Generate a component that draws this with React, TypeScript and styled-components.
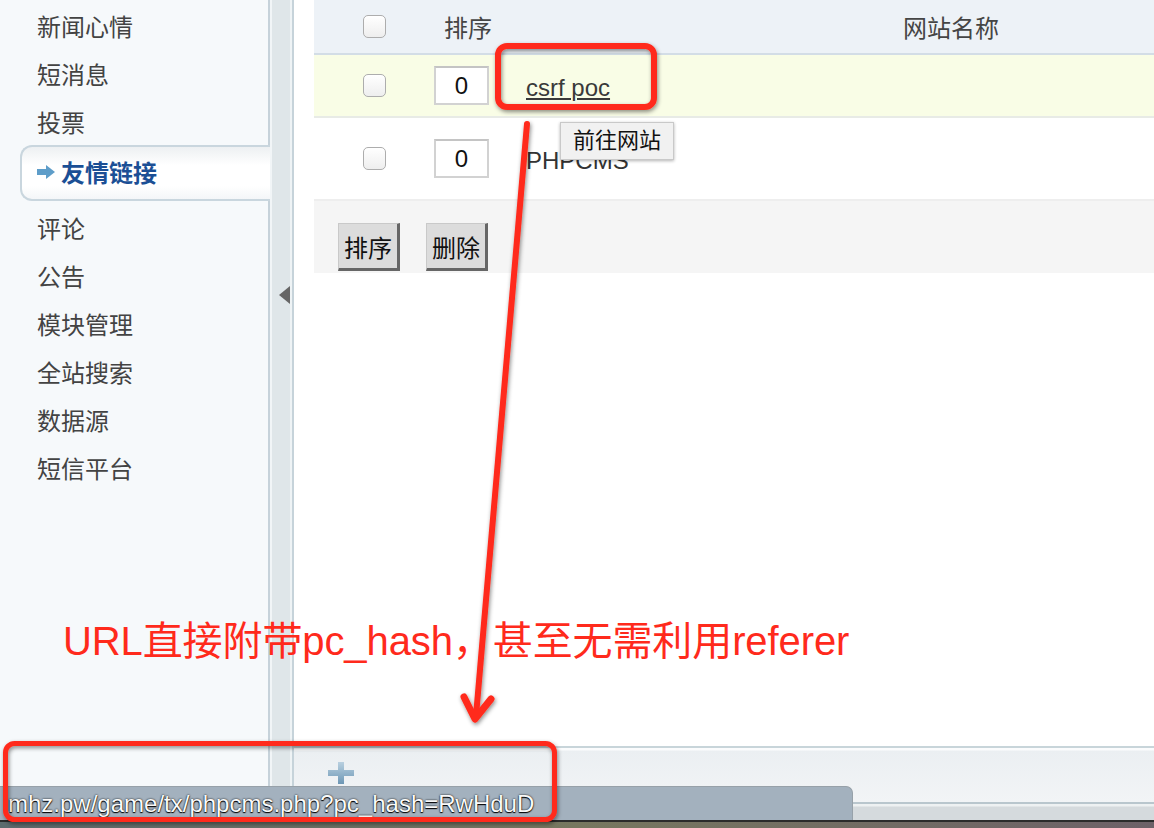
import React from "react";
import styled, { createGlobalStyle } from "styled-components";

const Global = createGlobalStyle`
  html, body { margin: 0; padding: 0; background: #fff; }
  body {
    font-family: "Liberation Sans", "Noto Sans CJK SC", sans-serif;
    overflow: hidden;
  }
  * { box-sizing: border-box; }
`;

const Screen = styled.div`
  position: relative;
  width: 1154px;
  height: 828px;
  overflow: hidden;
  display: flex;
  flex-direction: column;
`;

const Body = styled.div`
  display: flex;
  height: 802px;
  flex: none;
`;

const Sidebar = styled.nav`
  width: 270px;
  flex: none;
  background: #f6f9fb;
  border-right: 2px solid #c6d2da;
  padding-top: 1px;
  display: flex;
  flex-direction: column;
`;

const NavItem = styled.div`
  height: 48px;
  display: flex;
  align-items: center;
  padding: 0 0 0 37px;
  font-size: 24px;
  color: #434343;
`;

const ActiveItem = styled.div`
  height: 56px;
  margin: 0 -2px 2px 20px;
  border: 2px solid #c9d6de;
  border-right: none;
  border-radius: 12px 0 0 12px;
  background: linear-gradient(#edf0f2, #ffffff 35%, #ffffff 75%, #f4f6f8);
  display: flex;
  align-items: center;
  gap: 6px;
  padding: 0 0 3px 15px;
  font-size: 24px;
  font-weight: bold;
  color: #1b4f95;
`;

const Splitter = styled.div`
  width: 24px;
  flex: none;
  border-left: 2px solid #f1f5f7;
  border-right: 2px solid #c6d3da;
  background: linear-gradient(to right, #dfe6e9 0, #dfe6e9 18px, #eef3f5 18px);
  padding: 286px 0 0 7px;
`;

const Main = styled.main`
  flex: 1;
  min-width: 0;
  display: flex;
  flex-direction: column;
  background: #fff;
  overflow: hidden;
`;

const Content = styled.div`
  flex: 1;
  padding-left: 20px;
`;

const Table = styled.div`
  width: 1062px;
`;

const Row = styled.div<{ $height: number; $bg: string; $line: string }>`
  display: grid;
  grid-template-columns: 120px 92px 850px;
  align-items: center;
  height: ${(p) => p.$height}px;
  background: ${(p) => p.$bg};
  border-bottom: 2px solid ${(p) => p.$line};
`;

const CheckCell = styled.div`
  display: flex;
  justify-content: center;
`;

const Checkbox = styled.span`
  display: block;
  width: 23px;
  height: 23px;
  border: 1px solid #adadad;
  border-radius: 5px;
  background: linear-gradient(#ffffff, #eeeeee);
  box-shadow: inset 0 1px 1px rgba(255, 255, 255, 0.8);
`;

const HeadLabel = styled.div<{ $align?: string; $pad?: number }>`
  font-size: 24px;
  color: #454545;
  text-align: ${(p) => p.$align || "left"};
  padding-left: ${(p) => p.$pad || 0}px;
`;

const OrderBox = styled.div`
  width: 55px;
  height: 39px;
  border: 2px solid #d2d2d2;
  border-top-color: #c4c4c4;
  background: #fff;
  font-size: 24px;
  line-height: 35px;
  text-align: center;
  color: #111;
`;

const NameLink = styled.a`
  font-size: 24px;
  color: #3a3a3a;
  text-decoration: underline;
`;

const NameCell = styled.div`
  padding-top: 5px;
`;

const NameText = styled.span`
  font-size: 24px;
  color: #333;
`;

const ButtonBar = styled.div`
  height: 72px;
  background: #f5f5f5;
  padding: 22px 0 0 24px;
  display: flex;
  gap: 26px;
  align-items: flex-start;
`;

const Button = styled.button`
  width: 62px;
  height: 48px;
  padding: 0;
  background: #dcdcdc;
  border-top: 1px solid #c9c9c9;
  border-left: 1px solid #c9c9c9;
  border-right: 3px solid #666;
  border-bottom: 3px solid #666;
  font-family: "Liberation Sans", "Noto Sans CJK SC", sans-serif;
  font-size: 24px;
  color: #111;
`;

const Footer = styled.div`
  height: 56px;
  flex: none;
  border-top: 2px solid #c8d5da;
  background: linear-gradient(#fbfcfd 0, #fbfcfd 2px, #ebeff2 3px, #f2f4f6 100%);
  padding: 14px 0 0 34px;
`;

const BottomStrip = styled.div`
  height: 18px;
  flex: none;
  border-top: 2px solid #b9c6cd;
  background: linear-gradient(#eef1f2 0, #eef1f2 2px, #d5dadd 3px);
`;

const DarkStrip = styled.div`
  height: 8px;
  flex: none;
  border-top: 2px solid #2b2b2b;
  background: linear-gradient(to right, #5c6b6e, #77775f 50%, #6d6168);
`;

const StatusBubble = styled.div`
  position: absolute;
  left: 0;
  bottom: 8px;
  width: 853px;
  height: 34px;
  background: #a3b1be;
  border-top: 1px solid #97a1a9;
  border-right: 1px solid #97a1a9;
  border-top-right-radius: 7px;
  padding-left: 8px;
  font-size: 24px;
  line-height: 33px;
  color: #fafafa;
  text-shadow: 0 0 2px #000, 0 1px 1px #000;
  white-space: nowrap;
`;

const Tooltip = styled.div`
  position: absolute;
  left: 560px;
  top: 122px;
  width: 114px;
  height: 38px;
  background: #f1f1f1;
  border: 1px solid #c9c9c9;
  box-shadow: 0 1px 3px rgba(0, 0, 0, 0.3);
  font-size: 22px;
  line-height: 36px;
  text-align: center;
  color: #111;
`;

const Overlay = styled.svg`
  position: absolute;
  left: 0;
  top: 0;
  pointer-events: none;
`;

const NoteText = styled.div`
  position: absolute;
  left: 63px;
  top: 621px;
  font-size: 40px;
  line-height: 40px;
  letter-spacing: -0.1px;
  color: #ff2a1c;
  white-space: nowrap;
`;

const RightArrow = () => (
  <svg width="18" height="14" viewBox="0 0 18 14">
    <rect x="0" y="4" width="10" height="6" fill="#5e9dc9" />
    <polygon points="9,0 18,7 9,14" fill="#5e9dc9" />
  </svg>
);

const LeftTriangle = () => (
  <svg width="11" height="18" viewBox="0 0 11 18">
    <polygon points="11,0 11,18 0,9" fill="#666" />
  </svg>
);

const PlusIcon = () => (
  <svg width="26" height="22" viewBox="0 0 26 22">
    <defs>
      <linearGradient id="pg" x1="0" y1="0" x2="0" y2="1">
        <stop offset="0" stopColor="#b9d0e0" />
        <stop offset="1" stopColor="#6d97b5" />
      </linearGradient>
    </defs>
    <path d="M10 0h6v8h10v6H16v8h-6v-8H0V8h10z" fill="url(#pg)" />
  </svg>
);

const navTop = ["新闻心情", "短消息", "投票"];
const navBottom = ["评论", "公告", "模块管理", "全站搜索", "数据源", "短信平台"];

export default function App() {
  return (
    <Screen>
      <Global />
      <Body>
        <Sidebar>
          {navTop.map((t) => (
            <NavItem key={t}>{t}</NavItem>
          ))}
          <ActiveItem>
            <RightArrow />
            友情链接
          </ActiveItem>
          {navBottom.map((t) => (
            <NavItem key={t}>{t}</NavItem>
          ))}
        </Sidebar>
        <Splitter>
          <LeftTriangle />
        </Splitter>
        <Main>
          <Content>
            <Table>
              <Row $height={55} $bg="#edf2f7" $line="#d3dde6">
                <CheckCell>
                  <Checkbox />
                </CheckCell>
                <HeadLabel $pad={10}>排序</HeadLabel>
                <HeadLabel $align="center">网站名称</HeadLabel>
              </Row>
              <Row $height={63} $bg="#f9fde6" $line="#e8ebe6">
                <CheckCell>
                  <Checkbox />
                </CheckCell>
                <OrderBox>0</OrderBox>
                <NameCell>
                  <NameLink>csrf poc</NameLink>
                </NameCell>
              </Row>
              <Row $height={83} $bg="#ffffff" $line="#eeeeee">
                <CheckCell>
                  <Checkbox />
                </CheckCell>
                <OrderBox>0</OrderBox>
                <NameCell>
                  <NameText>PHPCMS</NameText>
                </NameCell>
              </Row>
            </Table>
            <ButtonBar>
              <Button>排序</Button>
              <Button>删除</Button>
            </ButtonBar>
          </Content>
          <Footer>
            <PlusIcon />
          </Footer>
        </Main>
      </Body>
      <BottomStrip />
      <DarkStrip />
      <StatusBubble>mhz.pw/game/tx/phpcms.php?pc_hash=RwHduD</StatusBubble>
      <Tooltip>前往网站</Tooltip>
      <NoteText>URL直接附带pc_hash，甚至无需利用referer</NoteText>
      <Overlay width="1154" height="828" viewBox="0 0 1154 828">
        <defs>
          <filter id="sh" x="-10%" y="-10%" width="120%" height="120%">
            <feDropShadow dx="1" dy="2" stdDeviation="2" floodColor="#000" floodOpacity="0.45" />
          </filter>
        </defs>
        <g filter="url(#sh)" fill="none" stroke="#ff2a1c" strokeLinecap="round" strokeLinejoin="round">
          <rect x="498" y="46" width="156" height="61" rx="9" strokeWidth="6" />
          <line x1="527" y1="124" x2="476" y2="716" strokeWidth="6" />
          <polyline points="464,697 475,719 491,699" strokeWidth="7" />
          <rect x="5.5" y="743.5" width="549" height="76" rx="9" strokeWidth="5" />
        </g>
      </Overlay>
    </Screen>
  );
}
